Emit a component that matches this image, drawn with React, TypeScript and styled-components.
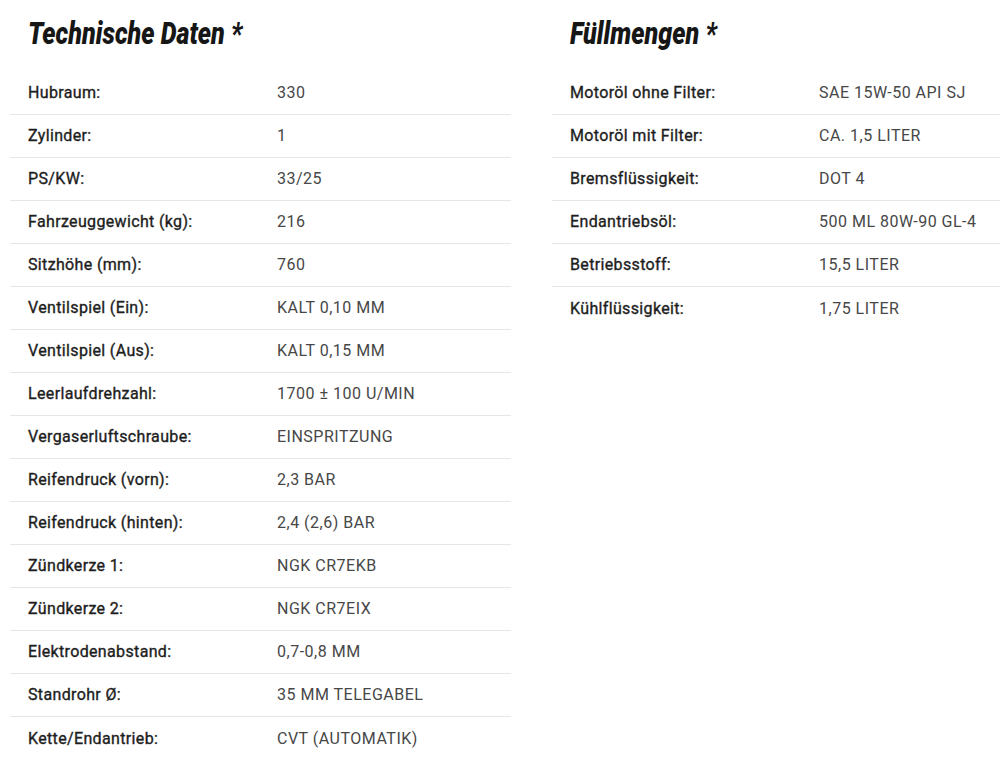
import React from 'react'
import styled, { createGlobalStyle } from 'styled-components'

const GlobalStyle = createGlobalStyle`
  html, body {
    margin: 0;
    padding: 0;
    background: #ffffff;
    overflow: hidden;
  }
  body {
    font-family: Roboto, "Noto Sans", Arial, sans-serif;
  }
`

interface Spec {
  label: string;
  value: string;
}

const technischeDaten: Spec[] = [
  { label: 'Hubraum:', value: '330' },
  { label: 'Zylinder:', value: '1' },
  { label: 'PS/KW:', value: '33/25' },
  { label: 'Fahrzeuggewicht (kg):', value: '216' },
  { label: 'Sitzhöhe (mm):', value: '760' },
  { label: 'Ventilspiel (Ein):', value: 'KALT 0,10 MM' },
  { label: 'Ventilspiel (Aus):', value: 'KALT 0,15 MM' },
  { label: 'Leerlaufdrehzahl:', value: '1700 ± 100 U/MIN' },
  { label: 'Vergaserluftschraube:', value: 'EINSPRITZUNG' },
  { label: 'Reifendruck (vorn):', value: '2,3 BAR' },
  { label: 'Reifendruck (hinten):', value: '2,4 (2,6) BAR' },
  { label: 'Zündkerze 1:', value: 'NGK CR7EKB' },
  { label: 'Zündkerze 2:', value: 'NGK CR7EIX' },
  { label: 'Elektrodenabstand:', value: '0,7-0,8 MM' },
  { label: 'Standrohr Ø:', value: '35 MM TELEGABEL' },
  { label: 'Kette/Endantrieb:', value: 'CVT (AUTOMATIK)' },
]

const fuellmengen: Spec[] = [
  { label: 'Motoröl ohne Filter:', value: 'SAE 15W-50 API SJ' },
  { label: 'Motoröl mit Filter:', value: 'CA. 1,5 LITER' },
  { label: 'Bremsflüssigkeit:', value: 'DOT 4' },
  { label: 'Endantriebsöl:', value: '500 ML 80W-90 GL-4' },
  { label: 'Betriebsstoff:', value: '15,5 LITER' },
  { label: 'Kühlflüssigkeit:', value: '1,75 LITER' },
]

const Page = styled.div`
  display: flex;
  gap: 41px;
  padding: 0 0 0 10px;
  width: 1100px;
`

const Column = styled.section`
  width: 501px;
  flex: none;
`

const TitleBar = styled.div`
  height: 72px;
  padding: 14px 18px 0;
  box-sizing: border-box;
`

// condensed headline face is not installed, so squeeze Roboto horizontally
const Title = styled.h2`
  display: inline-block;
  margin: 0;
  font-family: Roboto, "DejaVu Sans", sans-serif;
  font-style: italic;
  font-weight: 900;
  font-size: 31px;
  line-height: 40px;
  color: #161616;
  transform: scaleX(0.81);
  transform-origin: left center;
  white-space: nowrap;
`

const Table = styled.div`
  display: flex;
  flex-direction: column;
`

const Row = styled.div`
  display: grid;
  grid-template-columns: 249px 1fr;
  align-items: center;
  height: 43px;
  box-sizing: border-box;
  padding: 0 18px 1px;
  font-size: 16px;
  border-bottom: 1px solid #e6e6e6;

  &:last-child {
    border-bottom: none;
  }
`

// medium weight look: regular face with a thin stroke
const Label = styled.span`
  color: #1e1e1e;
  font-weight: 400;
  letter-spacing: 0.35px;
  -webkit-text-stroke: 0.35px #1e1e1e;
`

const Value = styled.span`
  color: #474747;
  font-weight: 400;
  letter-spacing: 0.5px;
`

const SpecTable: React.FC<{ title: string; items: Spec[] }> = ({ title, items }) => {
  return (
    <Column>
      <TitleBar>
        <Title>{title}</Title>
      </TitleBar>
      <Table>
        {items.map(x => (
          <Row key={x.label}>
            <Label>{x.label}</Label>
            <Value>{x.value}</Value>
          </Row>
        ))}
      </Table>
    </Column>
  )
}

export default function App() {
  return (
    <>
      <GlobalStyle />
      <Page>
        <SpecTable title="Technische Daten *" items={technischeDaten} />
        <SpecTable title="Füllmengen *" items={fuellmengen} />
      </Page>
    </>
  )
}
